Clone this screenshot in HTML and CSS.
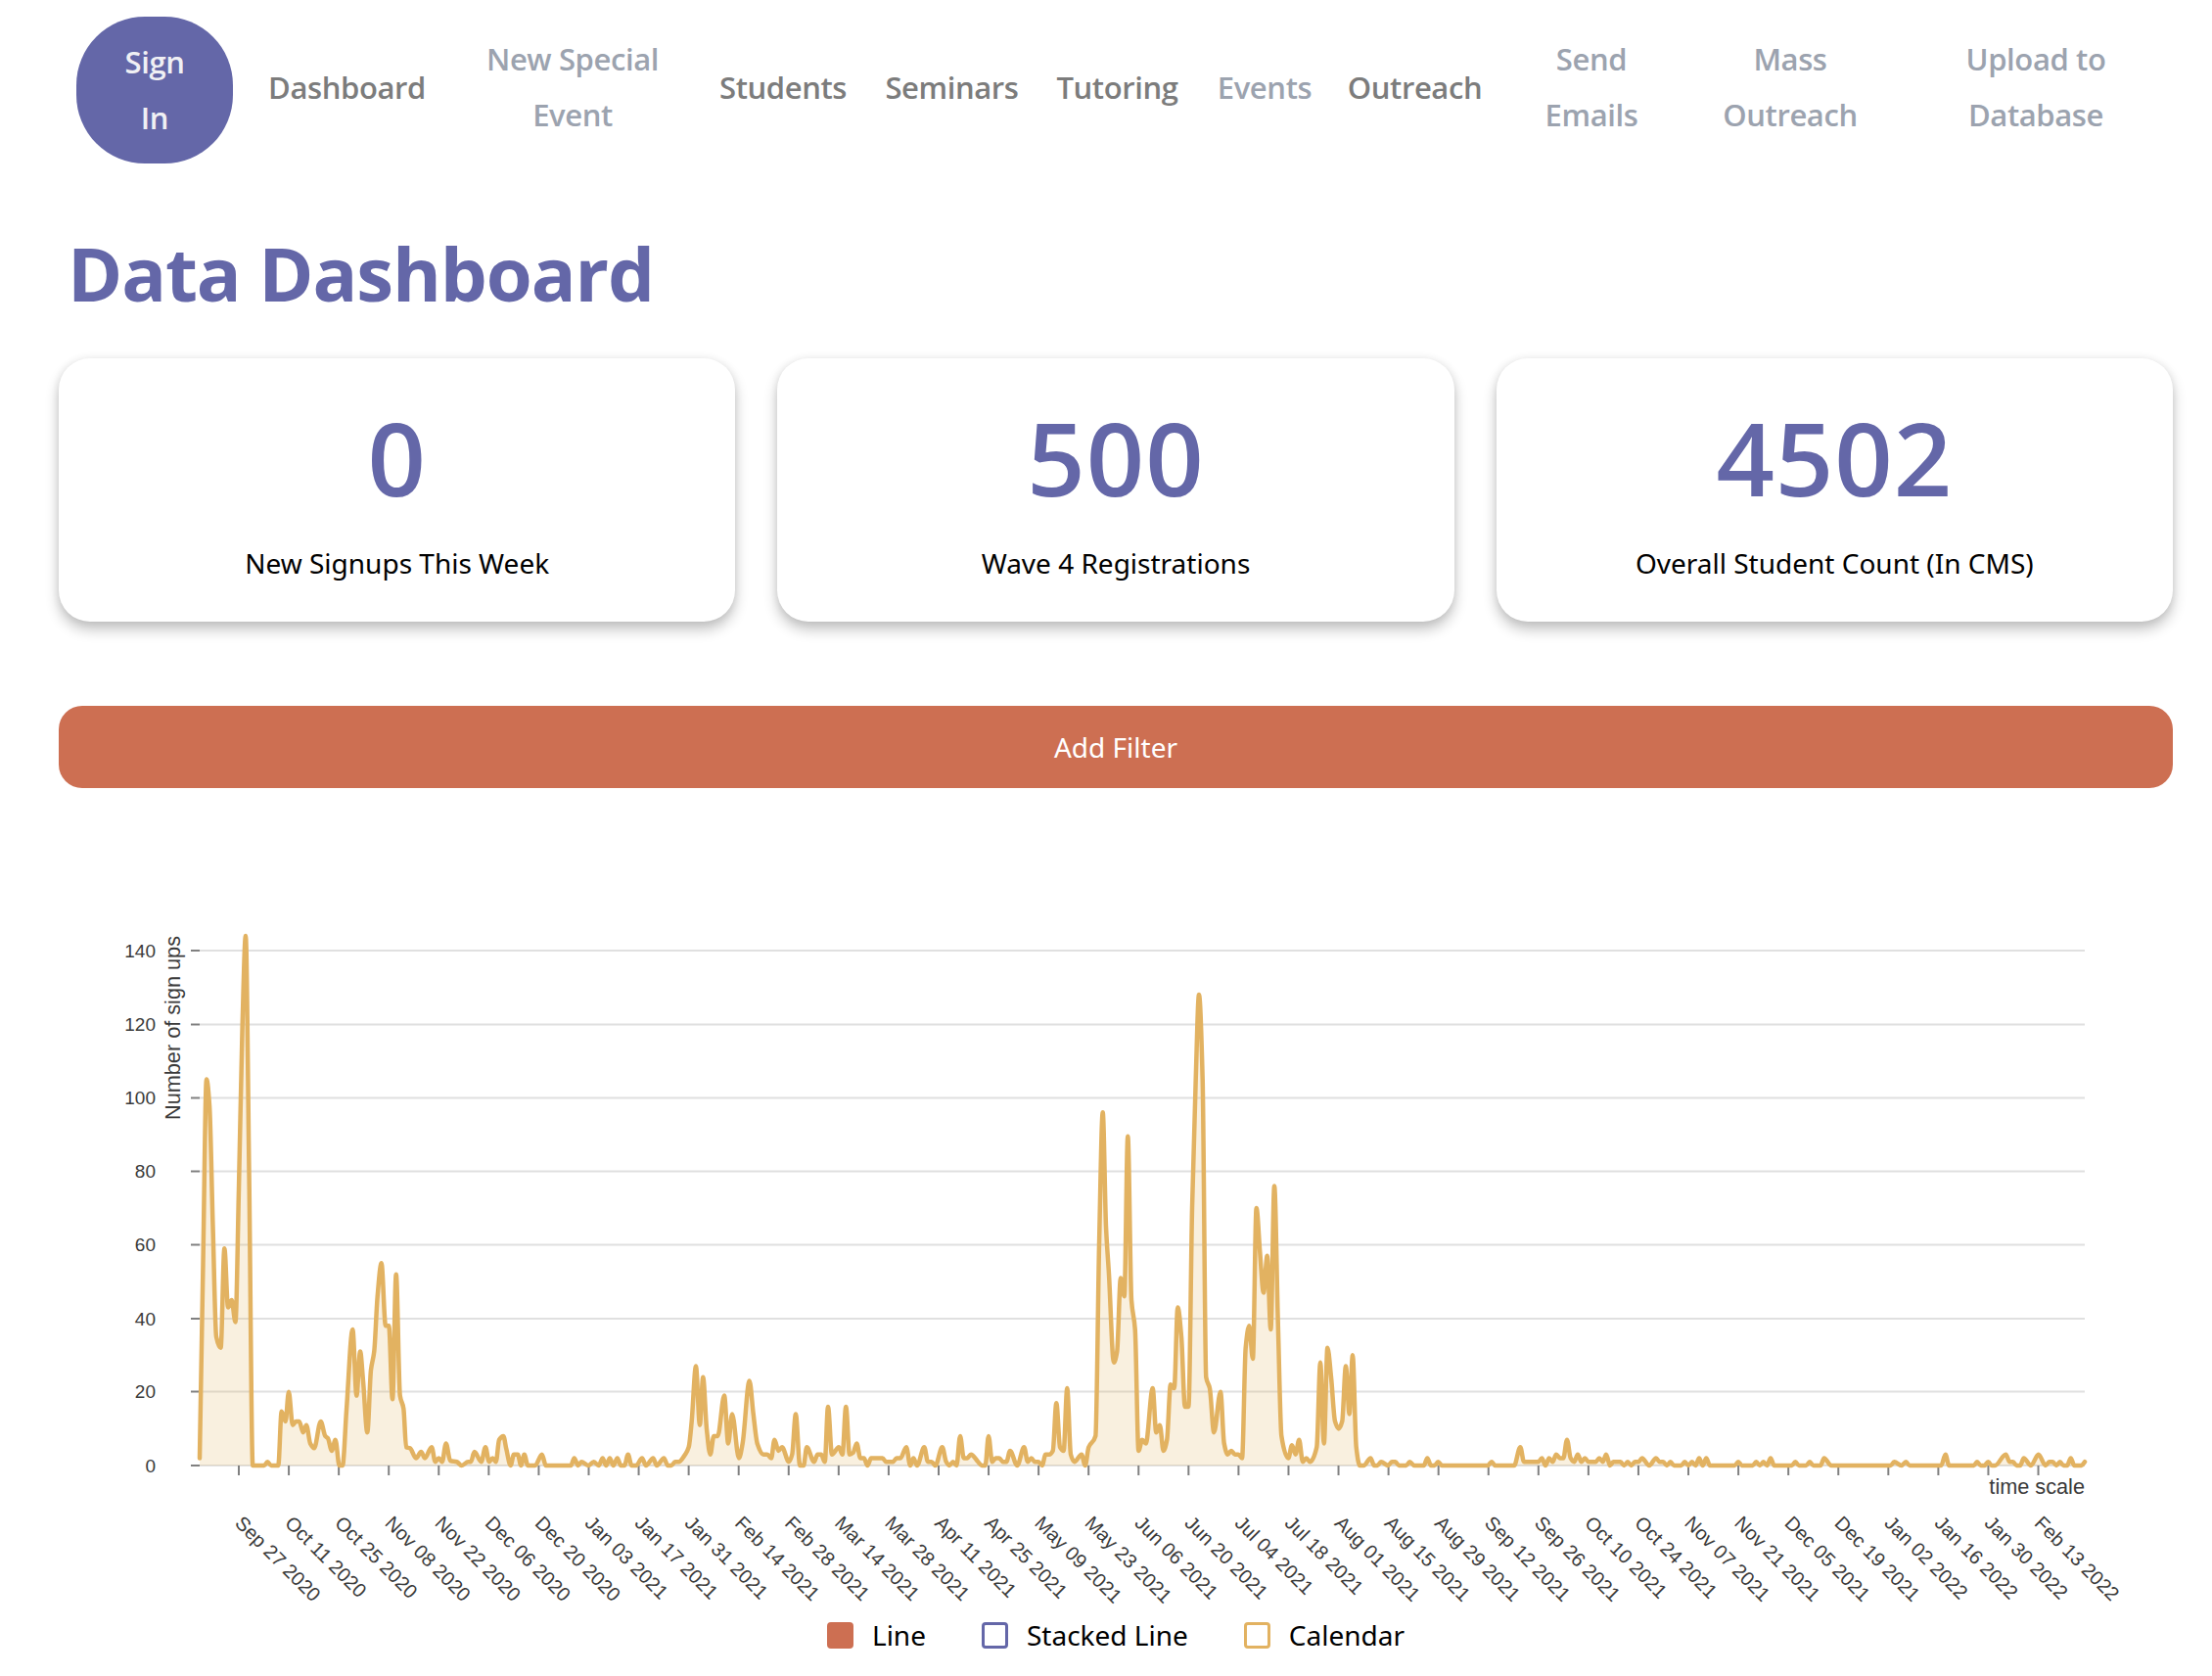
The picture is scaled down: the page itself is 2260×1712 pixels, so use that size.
FILE: index.html
```html
<!DOCTYPE html>
<html lang="en">
<head>
<meta charset="utf-8">
<title>Data Dashboard</title>
<link rel="stylesheet" href="styles.css">
</head>
<body>
<nav class="nav">
  <a class="nav-signin">Sign<br>In</a>
  <a class="nav-link dark">Dashboard</a>
  <a class="nav-link">New Special<br>Event</a>
  <a class="nav-link dark">Students</a>
  <a class="nav-link dark">Seminars</a>
  <a class="nav-link dark">Tutoring</a>
  <a class="nav-link">Events</a>
  <a class="nav-link dark">Outreach</a>
  <a class="nav-link">Send<br>Emails</a>
  <a class="nav-link">Mass<br>Outreach</a>
  <a class="nav-link">Upload to<br>Database</a>
</nav>
<main class="main">
  <h1 class="title">Data Dashboard</h1>
  <section class="cards">
    <div class="card"><div class="card-num">0</div><div class="card-label">New Signups This Week</div></div>
    <div class="card"><div class="card-num">500</div><div class="card-label">Wave 4 Registrations</div></div>
    <div class="card"><div class="card-num">4502</div><div class="card-label">Overall Student Count (In CMS)</div></div>
  </section>
  <button class="filter-btn">Add Filter</button>
  <svg class="chart" viewBox="60 880 2160 770" width="2160" height="770">
    <g class="grid">
      <line x1="204" x2="2130" y1="971" y2="971"/>
      <line x1="204" x2="2130" y1="1046.5" y2="1046.5"/>
      <line x1="204" x2="2130" y1="1121.5" y2="1121.5"/>
      <line x1="204" x2="2130" y1="1196.5" y2="1196.5"/>
      <line x1="204" x2="2130" y1="1271.5" y2="1271.5"/>
      <line x1="204" x2="2130" y1="1347" y2="1347"/>
      <line x1="204" x2="2130" y1="1421.5" y2="1421.5"/>
      <line x1="204" x2="2130" y1="1497" y2="1497"/>
    </g>
    <g class="ticks" id="ticks">
      <line x1="195" x2="204" y1="971" y2="971"/>
      <line x1="195" x2="204" y1="1046.5" y2="1046.5"/>
      <line x1="195" x2="204" y1="1121.5" y2="1121.5"/>
      <line x1="195" x2="204" y1="1196.5" y2="1196.5"/>
      <line x1="195" x2="204" y1="1271.5" y2="1271.5"/>
      <line x1="195" x2="204" y1="1347" y2="1347"/>
      <line x1="195" x2="204" y1="1421.5" y2="1421.5"/>
      <line x1="195" x2="204" y1="1497" y2="1497"/>
    </g>
    <path class="area" id="area"/>
    <path class="series" id="series"/>
    <g class="axis-text y-labels">
      <text x="159" y="978">140</text>
      <text x="159" y="1053">120</text>
      <text x="159" y="1128">100</text>
      <text x="159" y="1203">80</text>
      <text x="159" y="1278">60</text>
      <text x="159" y="1354">40</text>
      <text x="159" y="1428">20</text>
      <text x="159" y="1504">0</text>
    </g>
    <text class="axis-title y-title" transform="translate(184 1050) rotate(-90)">Number of sign ups</text>
    <text class="axis-title x-title" x="2130" y="1526">time scale</text>
    <g class="axis-text" id="dates">
      <text data-i="0">Sep 27 2020</text><text data-i="1">Oct 11 2020</text><text data-i="2">Oct 25 2020</text><text data-i="3">Nov 08 2020</text><text data-i="4">Nov 22 2020</text><text data-i="5">Dec 06 2020</text><text data-i="6">Dec 20 2020</text><text data-i="7">Jan 03 2021</text><text data-i="8">Jan 17 2021</text><text data-i="9">Jan 31 2021</text><text data-i="10">Feb 14 2021</text><text data-i="11">Feb 28 2021</text><text data-i="12">Mar 14 2021</text><text data-i="13">Mar 28 2021</text><text data-i="14">Apr 11 2021</text><text data-i="15">Apr 25 2021</text><text data-i="16">May 09 2021</text><text data-i="17">May 23 2021</text><text data-i="18">Jun 06 2021</text><text data-i="19">Jun 20 2021</text><text data-i="20">Jul 04 2021</text><text data-i="21">Jul 18 2021</text><text data-i="22">Aug 01 2021</text><text data-i="23">Aug 15 2021</text><text data-i="24">Aug 29 2021</text><text data-i="25">Sep 12 2021</text><text data-i="26">Sep 26 2021</text><text data-i="27">Oct 10 2021</text><text data-i="28">Oct 24 2021</text><text data-i="29">Nov 07 2021</text><text data-i="30">Nov 21 2021</text><text data-i="31">Dec 05 2021</text><text data-i="32">Dec 19 2021</text><text data-i="33">Jan 02 2022</text><text data-i="34">Jan 16 2022</text><text data-i="35">Jan 30 2022</text><text data-i="36">Feb 13 2022</text>
    </g>
  </svg>
  <div class="legend">
    <span class="legend-item"><i class="swatch swatch-line"></i>Line</span>
    <span class="legend-item"><i class="swatch swatch-stacked"></i>Stacked Line</span>
    <span class="legend-item"><i class="swatch swatch-calendar"></i>Calendar</span>
  </div>
</main>
<script src="chart.js"></script>
</body>
</html>
```
FILE: styles.css
```css
* { box-sizing: border-box; }
html, body { margin: 0; background: #fff; }
body { width: 2260px; height: 1712px; overflow: hidden; font-family: "Noto Sans", "Lato", sans-serif; color: #000; }

.nav {
  display: grid;
  grid-template-columns: 178px 197px 264px 166px 179px 159px 142px 165px 196px 210px 292px;
  align-items: center;
  padding: 17px 0 0 78px;
  font-family: "Open Sans", "Noto Sans", sans-serif;
  font-weight: 600;
  font-size: 31px;
  line-height: 57px;
  letter-spacing: -0.4px;
  text-align: center;
}
.nav-signin {
  width: 160px;
  height: 150px;
  padding-top: 18px;
  border-radius: 70px;
  background: #6467a8;
  color: #f0f0f4;
}
.nav-link { padding-bottom: 6px; color: #9ca3af; }
.nav-link.dark { color: #7c7c7c; }

.main { padding: 0 40px 0 60px; }
.title {
  margin: 0;
  padding: 62px 0 0 9px;
  height: 199px;
  font-family: "Open Sans", "Noto Sans", sans-serif;
  font-size: 76px;
  line-height: 100px;
  font-weight: 700;
  letter-spacing: -1.1px;
  color: #6467a8;
}
.cards {
  display: grid;
  grid-template-columns: repeat(3, 1fr);
  column-gap: 43px;
}
.card {
  height: 269px;
  padding-top: 41px;
  border-radius: 32px;
  background: #fff;
  box-shadow: 0 8px 14px rgba(0, 0, 0, 0.24), 0 0 8px rgba(0, 0, 0, 0.07);
  text-align: center;
}
.card-num {
  font-family: "Open Sans", "Noto Sans", sans-serif;
  font-size: 104px;
  line-height: 120px;
  font-weight: 600;
  letter-spacing: 1px;
  color: #6467a8;
}
.card-label { margin-top: 28px; font-size: 28px; line-height: 40px; }
.filter-btn {
  display: block;
  width: 100%;
  height: 84px;
  margin-top: 86px;
  border: 0;
  border-radius: 24px;
  background: #cd6f52;
  color: #fff;
  font-family: inherit;
  font-size: 28px;
}
.chart { display: block; margin-top: 75px; }
.grid line { stroke: #e0e0e0; stroke-width: 2; }
.ticks line { stroke: #808080; stroke-width: 2; }
.area { fill: #e2b261; fill-opacity: 0.2; stroke: none; }
.series { fill: none; stroke: #e2b261; stroke-width: 4.5; stroke-linejoin: round; stroke-linecap: round; }
.axis-text { font-family: "Liberation Sans", Arial, sans-serif; font-size: 20px; fill: #3a3a3a; }
.axis-title { font-family: "Liberation Sans", Arial, sans-serif; font-size: 21.7px; fill: #3a3a3a; }
.y-labels { text-anchor: end; font-size: 19px; }
.y-title { text-anchor: middle; }
.x-title { text-anchor: end; }
.legend {
  display: flex;
  justify-content: center;
  gap: 57px;
  margin-top: 5px;
  font-size: 28px;
  line-height: 30px;
}
.legend-item { display: inline-flex; align-items: center; gap: 19px; }
.swatch { display: block; width: 27px; height: 27px; border-radius: 4px; border: 3px solid; }
.swatch-line { background: #cd6f52; border-color: #cd6f52; }
.swatch-stacked { border-color: #6467a8; }
.swatch-calendar { border-color: #e2b261; }
```
FILE: chart.js
```js
// Signups per day, as [page x, count] keypoints.
var pts = [[204,2],[207.5,55],[211,105],[214,98],[217.5,65],[221,35],[225.5,32],[229.3,59],[233,43],[236.7,45],[240.5,39],[244,75],[247.7,120],[251,144],[254.5,80],[258.3,0],[262,0],[270,0],[273.3,1],[277,0],[284.3,0],[287.7,14.7],[291.7,12],[295,20],[299,11],[302.3,12],[305.7,12],[309.7,9],[313,11],[317,6],[321,4.7],[327.7,12],[332.3,8],[335,7.4],[339,4],[342.7,7],[346.7,0],[350,0],[354,15],[360.3,37],[364.3,19],[368,31],[371,23],[375.3,9],[379,26],[382.3,31],[385.7,46],[389.7,55],[394,38],[397.3,38],[401,18],[404.7,52],[408.7,19],[412.3,15.5],[415,5],[419,4.7],[425,2],[430.3,3.7],[434,2],[441,5],[444.7,1],[448.3,2],[451.7,1],[455.7,6],[460,1.3],[466.7,1],[471.7,0],[478.3,1],[481,1],[484.7,3.7],[491.7,1],[496,5],[499.7,1],[503.3,2],[506.7,1],[510,7],[514.3,8],[517.3,4.5],[521.7,0],[525,3],[529,3],[532.3,0],[535.7,3],[539.3,0],[546.7,0],[553.7,3],[557.7,0],[583.3,0],[586.7,2],[590.7,0],[594,1],[601,0],[606.7,1],[611.7,0],[615.7,2],[619.3,0],[623,2],[626.7,0],[630.7,2],[634.3,0],[638,0],[641.7,3],[645.3,0],[650,0],[656,2],[660,0],[667.3,2],[671,0],[678.3,2],[682.3,0],[686,0],[689.7,1],[693.3,1],[700,3],[703.7,5],[706.7,12],[711,27],[715,11],[718.3,24],[722,10],[725.7,3],[729.3,8],[733.3,8],[740,19],[744,6],[748,14],[755,2],[758.7,6],[765.7,23],[769.7,14],[773.7,6],[780,3],[784,3],[788,2],[791.3,7],[795.3,4],[799,5],[806,1],[809.3,3],[813,14],[817.3,0],[821,0],[824.3,5],[831.7,1],[835.3,3],[839,3],[842.7,1],[846,16],[850,3],[857,5],[860.7,3],[864.3,16],[868,3],[871.7,3.5],[875.3,6],[879,2],[882.7,2],[886.3,0],[890,2],[901.7,2],[905.3,1],[912.3,1],[916,2],[920,2],[926,5],[930,0],[933.3,2],[937,0],[944.3,5],[948,1],[951.7,1],[955.7,0],[962.7,5],[966.7,1],[970,0],[973.7,1],[977.3,0],[981,8],[984.7,2],[988.3,2],[992,3],[999.3,1],[1003,0],[1006.7,0],[1010,8],[1013.7,1],[1017.3,2],[1021,2],[1024.7,1],[1028.3,1],[1032,4],[1039.3,0],[1046.3,5],[1050,1],[1053.7,2],[1057.3,1],[1061,1],[1064.7,0],[1068.3,3],[1072,3],[1075.7,4],[1079.3,17],[1083,5],[1086.7,4],[1090.3,21],[1094,3],[1097.7,1],[1105,3],[1108.7,0],[1112.3,5],[1119.3,8],[1123,60],[1126.7,96],[1130,65],[1133,52],[1138,28],[1141.3,31],[1145,51],[1148.7,46],[1152.3,89.5],[1156,45],[1159.7,37],[1163.3,4],[1167,7],[1170.7,6],[1177.7,21],[1181.3,9],[1185,11],[1188.7,4],[1192.3,7],[1196,22],[1199.7,21],[1203.3,43],[1207,35],[1210.7,16],[1214.3,16],[1218,70],[1221.7,105],[1225,128],[1228.7,105],[1232.3,24],[1236,21],[1240.3,9],[1247,20],[1250.7,6],[1254.3,3],[1258,4],[1261.7,3],[1265.3,3],[1269,2],[1272.7,32],[1276.3,38],[1280,29],[1283.7,70],[1287.3,58],[1291,47],[1294.7,57],[1298.3,37],[1302,76],[1305.7,39],[1309.3,8],[1316.3,2],[1320,5.5],[1323.7,3],[1327.3,7],[1331,1],[1334.7,2],[1338.3,1],[1345.3,5],[1349,28],[1352.7,6],[1356.3,32],[1360,24],[1364,12],[1367.7,10],[1371.3,12],[1375,27],[1378.7,14],[1382,30],[1385.7,5],[1389.3,0],[1393.3,0],[1400.3,2],[1404,0],[1407.3,0],[1411,1],[1418.3,0],[1422,1],[1425.7,1],[1429.3,0],[1436.7,0],[1440.3,1],[1445,0],[1454.7,0],[1458.3,2],[1462,0],[1465.7,0],[1469.3,1],[1473.3,0],[1520,0],[1524,1],[1527.7,0],[1547,0],[1553.3,5],[1557,1],[1571.7,1],[1575.3,2],[1579,0],[1582.7,2],[1586.3,1],[1590,3],[1593.7,2],[1597.3,2],[1601,7],[1604.7,2],[1608.3,1],[1612,3],[1615.7,1],[1619.3,2],[1623,1],[1630.3,1],[1634,2],[1637.7,1],[1641,3],[1645,0],[1648.3,1],[1655.7,1],[1659.3,0],[1663,1],[1666.7,0],[1670.3,1],[1674,1],[1677.7,2],[1685,0],[1692,2],[1695.7,1],[1699.3,1],[1703,0],[1706.7,1],[1710.3,0],[1717.7,0],[1721.3,1],[1725,0],[1728.7,1],[1732.3,0],[1736,2],[1739.7,0],[1743.3,2],[1747,0],[1772.3,0],[1776,1],[1779.7,0],[1790.7,0],[1794.3,1],[1798,0],[1801.7,1],[1805.3,0],[1809,2],[1812.7,0],[1830.7,0],[1834.3,1],[1838,0],[1845.3,0],[1849,1],[1852.7,0],[1860,0],[1863.7,2],[1871,0],[1931.7,0],[1935.3,1],[1942.7,0],[1947.3,1],[1951,0],[1983.3,0],[1987.7,3],[1991.3,0],[2016.7,0],[2020,1],[2023.7,0],[2027.5,0],[2031.3,1],[2035,0],[2038.3,0],[2049.3,3],[2053.3,1],[2056.7,1],[2060.3,0],[2064,0],[2067.7,2],[2075,0],[2082.7,3],[2090,0],[2093.7,1],[2097.3,1],[2101,0],[2104.7,1],[2108.3,0],[2112,0],[2115.7,2],[2119.3,0],[2126.7,0],[2130,1]];

var BASE = 1497, UNIT = 526 / 140;
var xy = pts.map(function (p) { return [p[0], BASE - p[1] * UNIT]; });

// Monotone cubic path through the keypoints.
function monotonePath(a) {
  var n = a.length, s = [], m = [], i;
  for (i = 0; i < n - 1; i++) s[i] = (a[i + 1][1] - a[i][1]) / (a[i + 1][0] - a[i][0]);
  m[0] = s[0]; m[n - 1] = s[n - 2];
  for (i = 1; i < n - 1; i++) {
    if (s[i - 1] * s[i] <= 0) { m[i] = 0; continue; }
    var h0 = a[i][0] - a[i - 1][0], h1 = a[i + 1][0] - a[i][0];
    m[i] = 3 * (h0 + h1) / ((2 * h1 + h0) / s[i - 1] + (h1 + 2 * h0) / s[i]);
  }
  var d = 'M' + a[0][0] + ' ' + a[0][1].toFixed(2);
  for (i = 0; i < n - 1; i++) {
    var h = (a[i + 1][0] - a[i][0]) / 3;
    d += 'C' + (a[i][0] + h).toFixed(2) + ' ' + (a[i][1] + m[i] * h).toFixed(2) + ' ' +
      (a[i + 1][0] - h).toFixed(2) + ' ' + (a[i + 1][1] - m[i + 1] * h).toFixed(2) + ' ' +
      a[i + 1][0] + ' ' + a[i + 1][1].toFixed(2);
  }
  return d;
}

var line = monotonePath(xy);
document.getElementById('series').setAttribute('d', line);
document.getElementById('area').setAttribute('d', line + 'L2130 ' + BASE + 'L204 ' + BASE + 'Z');

// Bottom axis: one tick and one slanted date every 14 days.
var STEP = 51.07, FIRST = 244;
var ticks = document.getElementById('ticks');
Array.prototype.forEach.call(document.querySelectorAll('#dates text'), function (t) {
  var x = FIRST + STEP * (+t.getAttribute('data-i'));
  t.setAttribute('transform', 'translate(' + (x - 5).toFixed(1) + ' 1557) rotate(45)');
  var l = document.createElementNS('http://www.w3.org/2000/svg', 'line');
  l.setAttribute('x1', x); l.setAttribute('x2', x);
  l.setAttribute('y1', BASE); l.setAttribute('y2', BASE + 10);
  ticks.appendChild(l);
});
```
